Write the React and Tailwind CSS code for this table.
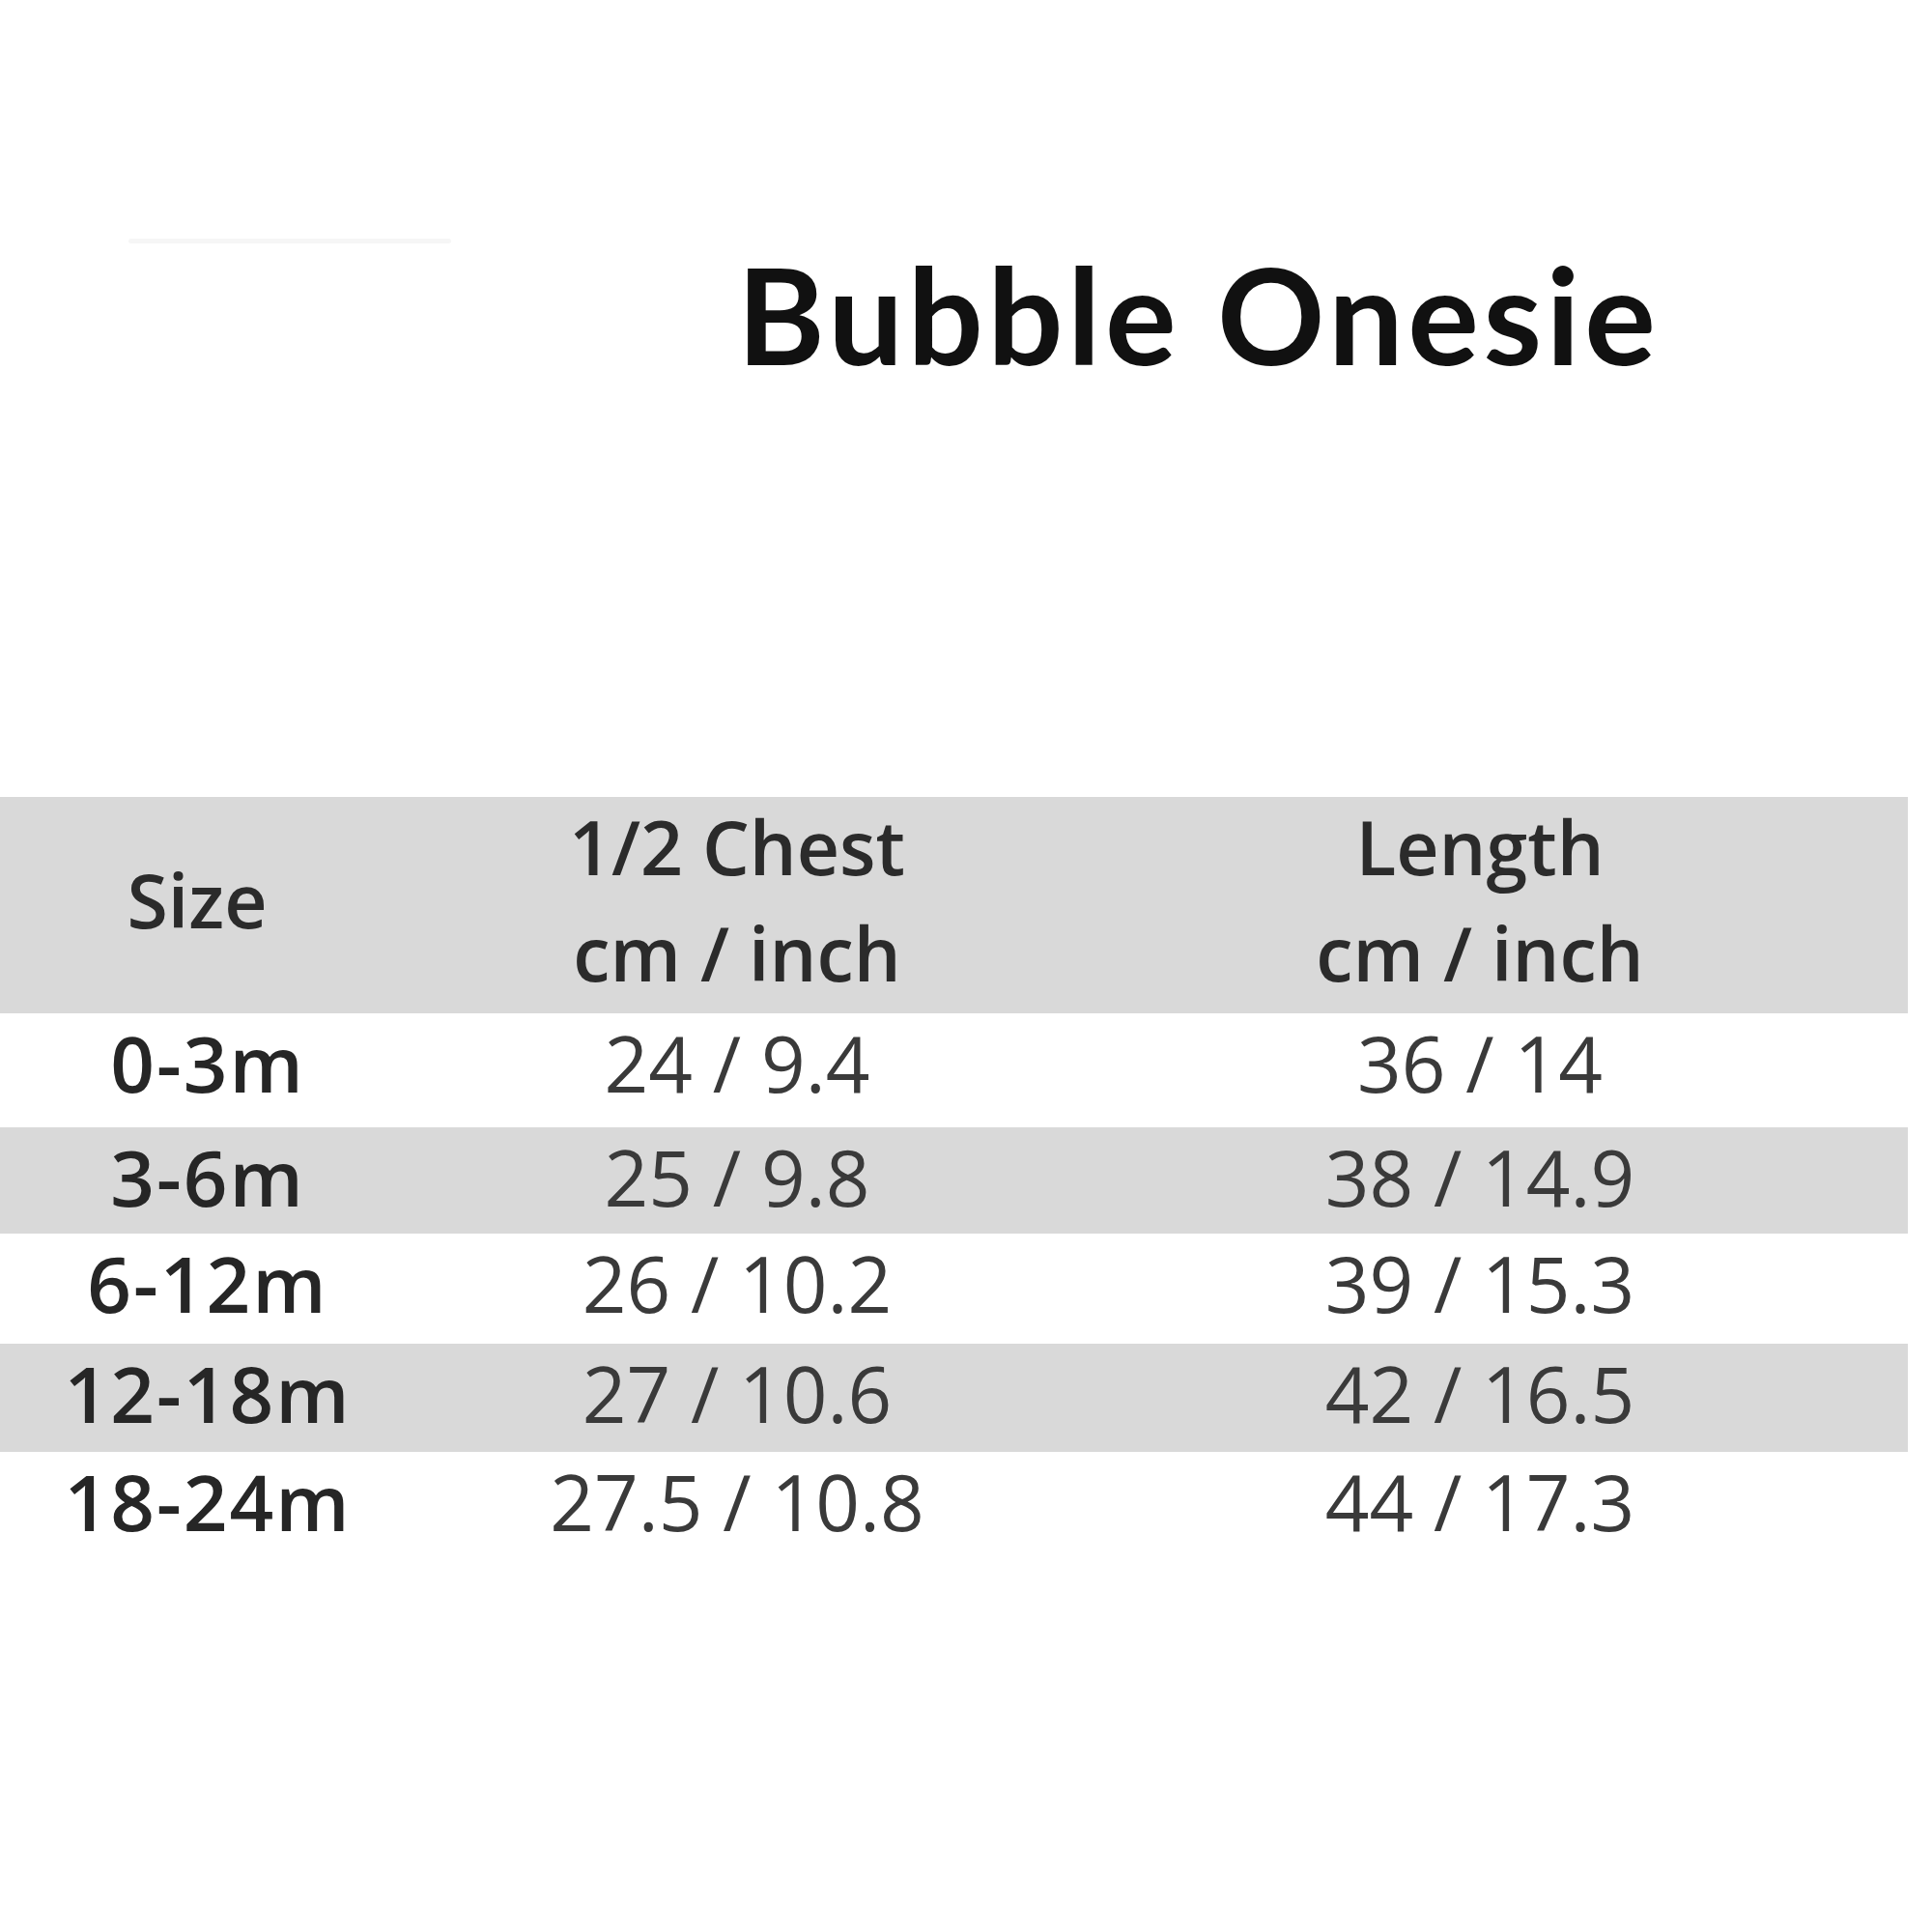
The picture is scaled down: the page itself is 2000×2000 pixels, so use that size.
import React from 'react'

const rows = [
  ['0-3m', '24 / 9.4', '36 / 14', 'h-[118px]'],
  ['3-6m', '25 / 9.8', '38 / 14.9', 'h-[110px]'],
  ['6-12m', '26 / 10.2', '39 / 15.3', 'h-[114px]'],
  ['12-18m', '27 / 10.6', '42 / 16.5', 'h-[112px]'],
  ['18-24m', '27.5 / 10.8', '44 / 17.3', 'h-[112px]'],
]

function App() {
  return (
    <div className="w-[2000px] h-[2000px] bg-white font-['Open_Sans',sans-serif]">
      <div className="flex items-start pt-[242px]">
        <div className="ml-[133px] mt-[5px] w-[334px] h-[5px] rounded-full bg-[#f6f6f6]"></div>
        <h1 className="ml-[296px] font-['Lato',sans-serif] font-bold text-[138px] leading-[166px] tracking-[4.5px] text-[#111]">
          Bubble Onesie
        </h1>
      </div>

      <div className="mt-[417px] w-[1975px]">
        <div className="grid grid-cols-[430px_666px_872px] h-[224px] bg-[#d9d9d9] font-semibold text-[77px] text-[#2b2b2b] text-center">
          <div className="flex items-center justify-center pb-[10px] pr-[22px] leading-[112px]">Size</div>
          <div className="flex flex-col">
            <span className="leading-[104px]">1/2 Chest</span>
            <span className="leading-[116px]">cm / inch</span>
          </div>
          <div className="flex flex-col">
            <span className="leading-[104px]">Length</span>
            <span className="leading-[116px]">cm / inch</span>
          </div>
        </div>
        {rows.map((r, i) => (
          <div
            key={r[0]}
            className={
              'grid grid-cols-[430px_666px_872px] text-[80px] leading-[102px] text-center ' +
              r[3] +
              (i % 2 === 1 ? ' bg-[#d9d9d9]' : ' bg-white')
            }
          >
            <div className="font-semibold tracking-[2px] text-[#262626]">{r[0]}</div>
            <div className="text-[#3a3a3a]">{r[1]}</div>
            <div className="text-[#3a3a3a]">{r[2]}</div>
          </div>
        ))}
      </div>
    </div>
  )
}

export default App
